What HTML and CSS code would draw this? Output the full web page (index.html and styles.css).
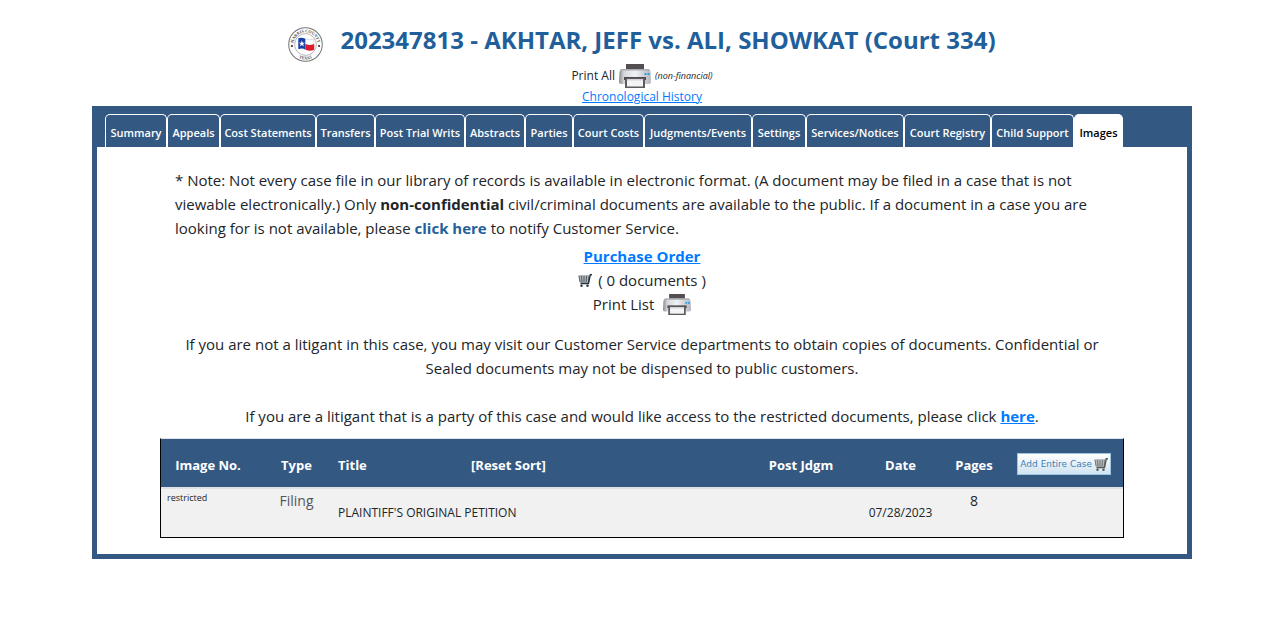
FILE: index.html
```html
<!DOCTYPE html>
<html lang="en">
<head>
    <meta charset="UTF-8">
    <title>202347813 - AKHTAR, JEFF vs. ALI, SHOWKAT (Court 334)</title>
    <link rel="stylesheet" href="styles.css">
</head>
<body>
    <!-- Shared icons -->
    <svg class="icon-defs" aria-hidden="true">
        <defs>
            <linearGradient id="printer-body" x1="0" y1="0" x2="1" y2="0">
                <stop offset="0" stop-color="#85888c"/>
                <stop offset="0.15" stop-color="#d4d6da"/>
                <stop offset="0.5" stop-color="#f0f1f5"/>
                <stop offset="1" stop-color="#b4b7be"/>
            </linearGradient>
        </defs>
        <symbol id="printer" viewBox="0 0 32 24">
            <path d="M7 0h18v6H7z" fill="#544e52"/>
            <path d="M3 5h26q2 0 2.500 3l.5 10q0 2-2 2H2q-2 0-2-2L.5 8Q1 5 3 5z" fill="url(#printer-body)"/>
            <path d="M3 5h26q1.500 0 2 1.500H1Q1.500 5 3 5z" fill="#a9abb0"/>
            <path d="M5 13h22v3H5z" fill="#4e494c"/>
            <path d="M6 14h20v10H6z" fill="#5f5a5e"/>
            <path d="M8 15h16v7.500H8z" fill="#f4f3f6"/>
            <path d="M8 15h16v1.500H8z" fill="#d4d2d6"/>
            <path d="M25.500 9h2v2h-2zm3 0h2v2h-2z" fill="#2f9be0"/>
        </symbol>
        <symbol id="cart" viewBox="0 0 14 13">
            <path d="M14 .7h-1.700L10.500 9.500H2.500" fill="none" stroke="currentColor" stroke-width="1.400"/>
            <path d="M.5 2h11M1 4h10.300M1.300 6h9.700M1.800 8h8.700M1 2l1 6M3.500 2l.5 6M6 2v6M8.500 2l-.3 6M11 2l-.6 6" fill="none" stroke="currentColor" stroke-width="0.700"/>
            <circle cx="3.500" cy="11.700" r="1.200" fill="currentColor"/>
            <circle cx="9.500" cy="11.700" r="1.200" fill="currentColor"/>
        </symbol>
    </svg>

    <div class="page">
        <header class="case-header">
            <div class="case-title">
                <svg class="seal" viewBox="0 0 34 34" role="img" aria-label="Harris County Texas">
                    <defs>
                        <path id="seal-top" d="M5.200 17a11.800 11.800 0 0 1 23.600 0"/>
                        <path id="seal-bottom" d="M2.500 17a14.500 14.500 0 0 0 29 0"/>
                    </defs>
                    <circle cx="17" cy="17" r="16.300" fill="#fff" stroke="#777" stroke-width="1"/>
                    <circle cx="17" cy="17" r="10.600" fill="#fff" stroke="#999" stroke-width="0.700"/>
                    <text class="seal-text"><textPath href="#seal-top" startOffset="50%">HARRIS COUNTY</textPath></text>
                    <text class="seal-text"><textPath href="#seal-bottom" startOffset="50%">TEXAS</textPath></text>
                    <circle cx="3.800" cy="18.500" r="1" fill="#222"/>
                    <circle cx="30.200" cy="18.500" r="1" fill="#222"/>
                    <path d="M10 11q3-1.500 7 .5V22q-3-2-7-.5z" fill="#173fa6"/>
                    <path d="M17 11.500q4 2 8 0V17q-4 2-8 0z" fill="#fff" stroke="#aaa" stroke-width="0.400"/>
                    <path d="M17 16.500q4 2 8.500 0v5.500q-4 2-8.500 0z" fill="#dc1c2c"/>
                    <path d="M13.500 13l.8 2.200h2.200l-1.800 1.400.7 2.300-1.900-1.400-1.900 1.400.7-2.300-1.800-1.400h2.200z" fill="#fff"/>
                </svg>
                <h1>202347813 - AKHTAR, JEFF vs. ALI, SHOWKAT (Court 334)</h1>
            </div>
            <div class="print-all">
                <span>Print All</span>
                <button type="button" class="icon-btn" aria-label="Print all"><svg class="printer-lg"><use href="#printer"/></svg></button>
                <em>(non-financial)</em>
            </div>
            <a class="history-link" href="#">Chronological History</a>
        </header>

        <div class="case-frame">
            <nav>
                <ul class="tabs">
                    <li><a href="#">Summary</a></li>
                    <li><a href="#">Appeals</a></li>
                    <li><a href="#">Cost Statements</a></li>
                    <li><a href="#">Transfers</a></li>
                    <li><a href="#">Post Trial Writs</a></li>
                    <li><a href="#">Abstracts</a></li>
                    <li><a href="#">Parties</a></li>
                    <li><a href="#">Court Costs</a></li>
                    <li><a href="#">Judgments/Events</a></li>
                    <li><a href="#">Settings</a></li>
                    <li><a href="#">Services/Notices</a></li>
                    <li><a href="#">Court Registry</a></li>
                    <li><a href="#">Child Support</a></li>
                    <li><a class="active" href="#" aria-current="page">Images</a></li>
                </ul>
            </nav>

            <main class="tab-panel">
                <p class="note">* Note: Not every case file in our library of records is available in electronic format. (A document may be filed in a case that is not<br>
                    viewable electronically.) Only <b>non-confidential</b> civil/criminal documents are available to the public. If a document in a case you are<br>
                    looking for is not available, please <a class="notify-link" href="#">click here</a> to notify Customer Service.</p>

                <div class="order">
                    <a class="strong-link" href="#">Purchase Order</a>
                    <div class="order-row"><svg class="cart-icon"><use href="#cart"/></svg> ( 0 documents )</div>
                    <div class="order-row print-list">Print List <button type="button" class="icon-btn" aria-label="Print list"><svg class="printer-sm"><use href="#printer"/></svg></button></div>
                </div>

                <p class="info">If you are not a litigant in this case, you may visit our Customer Service departments to obtain copies of documents. Confidential or<br>
                    Sealed documents may not be dispensed to public customers.</p>
                <p class="info litigant">If you are a litigant that is a party of this case and would like access to the restricted documents, please click <a class="strong-link" href="#">here</a>.</p>

                <table class="images">
                    <colgroup>
                        <col class="col-no">
                        <col class="col-type">
                        <col class="col-title">
                        <col class="col-sort">
                        <col class="col-post">
                        <col class="col-date">
                        <col class="col-pages">
                        <col class="col-add">
                    </colgroup>
                    <thead>
                        <tr>
                            <th>Image No.</th>
                            <th>Type</th>
                            <th class="left">Title</th>
                            <th class="left"><a href="#">[Reset Sort]</a></th>
                            <th>Post Jdgm</th>
                            <th>Date</th>
                            <th>Pages</th>
                            <th class="add-cell"><button type="button" class="add-btn">Add Entire Case <svg class="cart-icon"><use href="#cart"/></svg></button></th>
                        </tr>
                    </thead>
                    <tbody>
                        <tr>
                            <td class="restricted">restricted</td>
                            <td class="type">Filing</td>
                            <td class="doc" colspan="2">PLAINTIFF'S ORIGINAL PETITION</td>
                            <td></td>
                            <td class="doc date">07/28/2023</td>
                            <td class="pages">8</td>
                            <td></td>
                        </tr>
                    </tbody>
                </table>
            </main>
        </div>
    </div>
</body>
</html>
```
FILE: styles.css
```css
* {
    box-sizing: border-box;
}

body {
    font-family: 'Segoe UI', 'Open Sans', 'Noto Sans', sans-serif;
    font-size: 15px;
    line-height: 24px;
    color: #212529;
    background: #fff;
    margin: 0;
    padding: 24px 0 24px 22px;
}

a {
    color: #007bff;
}

.icon-defs {
    position: absolute;
    width: 0;
    height: 0;
}

.page {
    max-width: 1100px;
    margin: 0 auto;
}

/* Header */
.case-header {
    text-align: center;
}

.case-title {
    display: flex;
    align-items: center;
    justify-content: center;
    gap: 17px;
    height: 40px;
}

.seal {
    width: 35px;
    height: 35px;
}

.seal-text {
    font-family: 'Liberation Serif', serif;
    font-size: 4px;
    font-weight: bold;
    fill: #444;
    text-anchor: middle;
}

h1 {
    color: #1f5f9b;
    font-size: 24px;
    font-weight: 700;
    line-height: 32px;
    margin: 0 0 8px;
}

.print-all {
    display: flex;
    align-items: center;
    justify-content: center;
    gap: 4px;
    font-size: 12px;
}

.print-all em {
    font-size: 9px;
}

.icon-btn {
    display: inline-flex;
    padding: 0;
    border: 0;
    background: none;
    cursor: pointer;
}

.printer-lg {
    width: 32px;
    height: 24px;
}

.printer-sm {
    width: 28px;
    height: 21px;
}

.history-link {
    display: block;
    font-size: 12px;
    line-height: 18px;
}

/* Frame and tabs */
.case-frame {
    background: #335983;
    border: 5px solid #335983;
    padding-top: 3px;
}

.tabs {
    display: grid;
    grid-template-columns: 62px 53px 96px 59px 90px 60px 48px 71px 108px 54px 98px 87px 83px 49px;
    list-style: none;
    margin: 0;
    padding: 0 8px;
}

.tabs a {
    display: block;
    height: 33px;
    padding-top: 6px;
    border: 1px solid #fff;
    border-bottom: 0;
    border-radius: 5px 5px 0 0;
    color: #fff;
    font-size: 11px;
    font-weight: 600;
    text-align: center;
    white-space: nowrap;
    text-decoration: none;
}

.tabs a.active {
    background: #fff;
    color: #000;
}

.tab-panel {
    background: #fff;
    padding: 21px 63px 16px;
}

/* Panel text */
.note {
    margin: 0;
    padding: 0 15px;
}

.notify-link {
    color: #1f5f9b;
    font-weight: 700;
    text-decoration: none;
}

.strong-link {
    font-weight: 700;
}

.order {
    padding: 4px 0 16px;
    text-align: center;
}

.order-row {
    display: flex;
    align-items: center;
    justify-content: center;
    gap: 6px;
}

.print-list {
    gap: 9px;
}

.cart-icon {
    width: 14px;
    height: 13px;
    color: #24343c;
}

.info {
    margin: 0 0 24px;
    text-align: center;
}

.litigant {
    margin-bottom: 10px;
}

/* Images table */
.images {
    width: 100%;
    table-layout: fixed;
    border-collapse: separate;
    border-spacing: 0;
    border: 1px solid #000;
    border-top-color: #dee2e6;
}

.col-no { width: 94px; }
.col-type { width: 83px; }
.col-title { width: 133px; }
.col-sort { width: 270px; }
.col-post { width: 120px; }
.col-date { width: 79px; }
.col-pages { width: 68px; }

.images th {
    height: 50px;
    padding: 4px 0 0;
    background: #335983;
    border-bottom: 2px solid #dee2e6;
    color: #fff;
    font-size: 13px;
    font-weight: 700;
    vertical-align: middle;
}

.images th a {
    color: #fff;
    text-decoration: none;
}

.images .left {
    text-align: left;
}

.images .add-cell {
    padding: 0 12px 0 0;
    text-align: right;
}

.images .add-btn {
    display: inline-flex;
    align-items: center;
    gap: 2px;
    height: 22px;
    padding: 0 2px;
    border: 1px solid #9cc6e0;
    background: linear-gradient(#fff, #cfe3f1);
    color: #3f7fb5;
    font-family: 'DejaVu Sans', sans-serif;
    font-size: 9px;
    vertical-align: middle;
    white-space: nowrap;
}

.add-btn .cart-icon {
    color: #555;
}

.images td {
    height: 48px;
    padding: 0;
    background: #f1f1f1;
    text-align: center;
    vertical-align: top;
}

.images .restricted {
    padding-left: 6px;
    font-size: 9px;
    line-height: 18px;
    text-align: left;
}

.images .type {
    color: #555;
    font-size: 14px;
}

.images .doc {
    font-size: 12px;
    text-align: left;
    vertical-align: middle;
}

.images .date {
    text-align: center;
}

.images .pages {
    font-size: 14px;
}
```
